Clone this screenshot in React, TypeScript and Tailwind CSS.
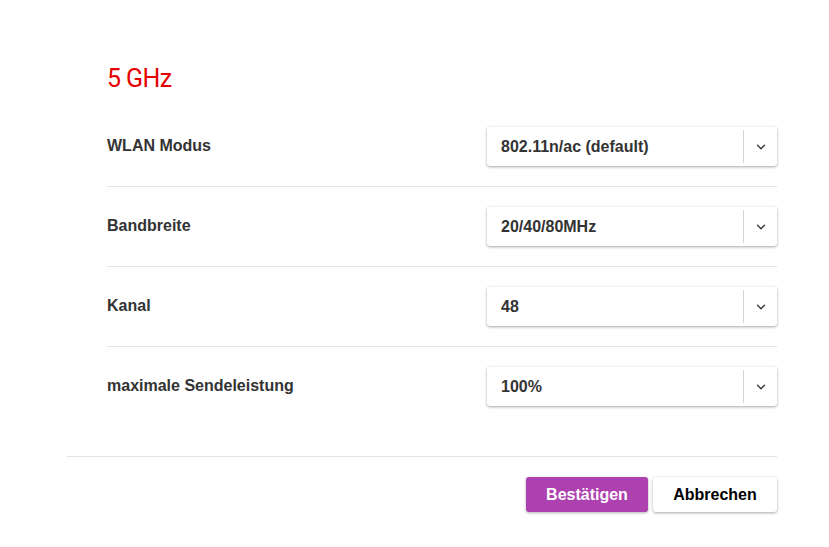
import { ChevronDown } from 'lucide-react'

const rows = [
  { label: 'WLAN Modus', value: '802.11n/ac (default)' },
  { label: 'Bandbreite', value: '20/40/80MHz' },
  { label: 'Kanal', value: '48' },
  { label: 'maximale Sendeleistung', value: '100%' },
]

function Select({ value }: { value: string }) {
  return (
    <div className="flex h-[39px] w-[290px] items-center rounded-[3px] bg-white shadow-[0_1px_3px_rgba(0,0,0,0.35)]">
      <span className="flex-1 pl-[14px] text-[16px] font-bold text-[#333]">{value}</span>
      <div className="h-[33px] w-px bg-[#d4d4d4]" />
      <div className="flex w-[33px] items-center justify-center">
        <ChevronDown className="h-[14px] w-[14px] text-[#333]" strokeWidth={2.25} />
      </div>
    </div>
  )
}

export default function App() {
  return (
    <main className="min-h-screen bg-white font-['Liberation_Sans',Arial,sans-serif]">
      <div className="ml-[67px] w-[710px] pt-[62px]">
        <div className="pl-[40px]">
          <h2 className="font-['Roboto',sans-serif] text-[25px] font-normal leading-[34px] tracking-[-0.6px] text-[#e60000]">5 GHz</h2>

          <div className="mt-[31px]">
            {rows.map((row, i) => (
              <div
                key={row.label}
                className={`flex items-center justify-between ${i === 0 ? '' : 'border-t border-[#e4e4e4] pt-[20px]'} ${i === rows.length - 1 ? 'pb-[50px]' : 'pb-[20px]'}`}
              >
                <span className="-mt-[2px] text-[16px] font-bold text-[#333]">{row.label}</span>
                <Select value={row.value} />
              </div>
            ))}
          </div>
        </div>

        <div className="flex justify-end gap-[5px] border-t border-[#e4e4e4] pt-[20px]">
          <button className="h-[35px] w-[122px] rounded-[3px] bg-[#ad41b0] text-[16px] font-bold text-white shadow-[0_1px_3px_rgba(0,0,0,0.3)]">
            Bestätigen
          </button>
          <button className="h-[35px] w-[124px] rounded-[3px] bg-white text-[16px] font-bold text-black shadow-[0_1px_3px_rgba(0,0,0,0.35)]">
            Abbrechen
          </button>
        </div>
      </div>
    </main>
  )
}
